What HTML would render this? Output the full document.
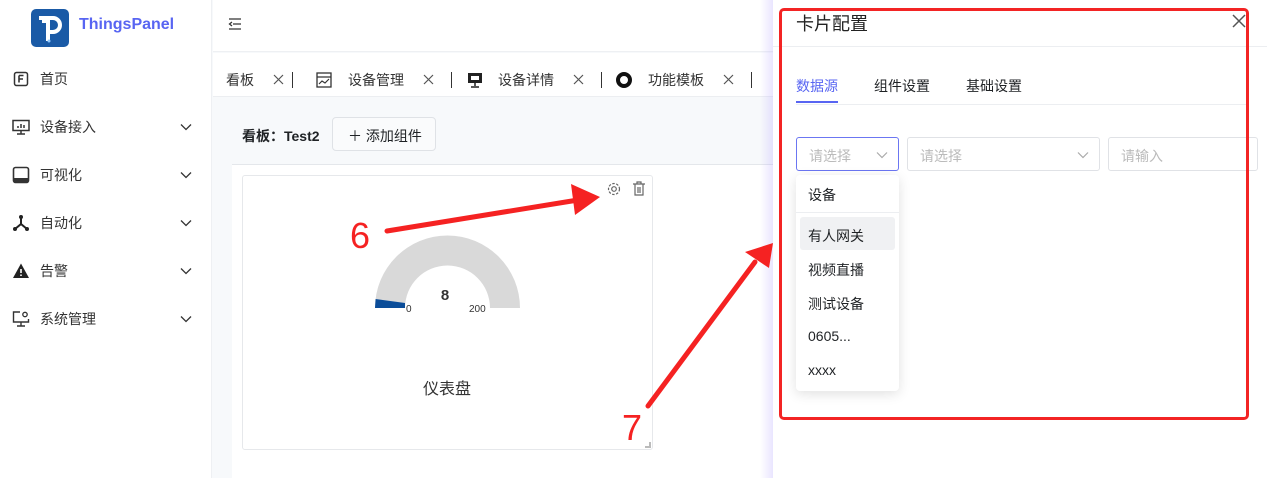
<!DOCTYPE html>
<html><head><meta charset="utf-8"><style>
*{box-sizing:border-box;margin:0;padding:0}
body{width:1267px;height:478px;overflow:hidden;position:relative;background:#f7f9fb;font-family:"Liberation Sans","Noto Sans CJK SC",sans-serif;color:#1f2225;font-size:14px}
.abs{position:absolute}
.side{left:0;top:0;width:212px;height:478px;background:#fff;border-right:1px solid #eef0f3}
.menu{left:12px;width:190px;height:20px;display:flex;align-items:center;font-size:14px;color:#333}
.menu .ic{width:18px;height:18px;margin-right:10px;display:flex;align-items:center;justify-content:center}
.menu .ch{position:absolute;right:10px;top:6px}
.tab{top:70px;font-size:14px;color:#333}
.x{top:74px}
</style></head><body>
<div class="abs side">
 <div class="abs" style="left:31px;top:9px;width:38px;height:38px;background:#1a5aa6;border-radius:5px">
  <svg width="38" height="38" viewBox="0 0 38 38"><path d="M8 9h14a7 7 0 0 1 0 14h-3M13 9v3h4v20" stroke="#fff" stroke-width="4" fill="none"/><circle cx="18" cy="32" r="1.5" fill="#8fc8ff"/></svg>
 </div>
 <div class="abs" style="left:79px;top:16px;font-size:16px;font-weight:bold;color:#5865f2">ThingsPanel</div>
 <div class="abs menu" style="top:69px"><div class="ic"><svg width="16" height="16"><rect x="1.5" y="1.5" width="13" height="13" rx="2" stroke="#333" fill="none" stroke-width="1.5"/><path d="M6 4.5v7M6 4.5h4.5M6 8h4" stroke="#333" stroke-width="1.6"/></svg></div>首页</div>
 <div class="abs menu" style="top:117px"><div class="ic"><svg width="18" height="16"><rect x="1" y="1.5" width="16" height="10" stroke="#333" fill="none" stroke-width="1.5"/><path d="M9 12v3M5 15h8M6 9V7M9 9V5M12 9V6" stroke="#333" stroke-width="1.5"/></svg></div>设备接入<svg class="ch" width="12" height="8"><path d="M1 1.5l5 5 5-5" stroke="#333" stroke-width="1.3" fill="none"/></svg></div>
 <div class="abs menu" style="top:165px"><div class="ic"><svg width="18" height="18"><rect x="1.5" y="1.5" width="15" height="15" rx="2" stroke="#333" fill="none" stroke-width="1.6"/><rect x="2" y="12" width="14" height="4" fill="#333"/></svg></div>可视化<svg class="ch" width="12" height="8"><path d="M1 1.5l5 5 5-5" stroke="#333" stroke-width="1.3" fill="none"/></svg></div>
 <div class="abs menu" style="top:213px"><div class="ic"><svg width="18" height="18"><path d="M9 3v7L3 15M9 10l6 5" stroke="#222" stroke-width="2" fill="none"/><circle cx="9" cy="3" r="2" fill="#222"/><circle cx="3" cy="15" r="2" fill="#222"/><circle cx="15" cy="15" r="2" fill="#222"/></svg></div>自动化<svg class="ch" width="12" height="8"><path d="M1 1.5l5 5 5-5" stroke="#333" stroke-width="1.3" fill="none"/></svg></div>
 <div class="abs menu" style="top:261px"><div class="ic"><svg width="18" height="18"><path d="M9 1.5L17 16H1z" fill="#222"/><path d="M9 7v4M9 12.5v1.5" stroke="#fff" stroke-width="1.6"/></svg></div>告警<svg class="ch" width="12" height="8"><path d="M1 1.5l5 5 5-5" stroke="#333" stroke-width="1.3" fill="none"/></svg></div>
 <div class="abs menu" style="top:309px"><div class="ic"><svg width="18" height="18"><path d="M8 2H1.5v10h15V9M9 12v4M5 16h8" stroke="#333" stroke-width="1.4" fill="none"/><circle cx="13" cy="4.5" r="2.2" stroke="#333" fill="none" stroke-width="1.3"/></svg></div>系统管理<svg class="ch" width="12" height="8"><path d="M1 1.5l5 5 5-5" stroke="#333" stroke-width="1.3" fill="none"/></svg></div>
</div>
<div class="abs" style="left:213px;top:0;width:560px;height:52px;background:#fff;border-bottom:1px solid #eef0f3"></div>
<svg class="abs" style="left:228px;top:17px" width="14" height="14"><path d="M1 2h12M5 7h8M1 12h12M4 5L1.5 7 4 9" stroke="#333" stroke-width="1.3" fill="none"/></svg>
<div class="abs" style="left:213px;top:53px;width:560px;height:44px;background:#fff;border-bottom:1px solid #eceef1"></div>
<div class="abs tab" style="left:226px">看板</div>
<svg class="abs x" style="left:273px" width="11" height="11"><path d="M1 1l9 9M10 1l-9 9" stroke="#555" stroke-width="1.2"/></svg>
<div class="abs" style="left:292px;top:72px;width:1px;height:16px;background:#333"></div>
<svg class="abs" style="left:316px;top:72px" width="16" height="16"><rect x="1" y="1" width="14" height="14" stroke="#333" fill="none" stroke-width="1.3"/><path d="M1 5h14M3 12l3-3 3 2 4-4" stroke="#333" stroke-width="1.2" fill="none"/></svg>
<div class="abs tab" style="left:348px">设备管理</div>
<svg class="abs x" style="left:423px" width="11" height="11"><path d="M1 1l9 9M10 1l-9 9" stroke="#555" stroke-width="1.2"/></svg>
<div class="abs" style="left:451px;top:72px;width:1px;height:16px;background:#333"></div>
<svg class="abs" style="left:467px;top:72px" width="16" height="16"><rect x="1" y="1" width="14" height="10" fill="#222"/><rect x="4" y="4" width="8" height="4" fill="#fff"/><path d="M8 11v3M4 15h8" stroke="#222" stroke-width="1.5"/></svg>
<div class="abs tab" style="left:498px">设备详情</div>
<svg class="abs x" style="left:573px" width="11" height="11"><path d="M1 1l9 9M10 1l-9 9" stroke="#555" stroke-width="1.2"/></svg>
<div class="abs" style="left:601px;top:72px;width:1px;height:16px;background:#333"></div>
<div class="abs" style="left:616px;top:72px;width:16px;height:16px;border-radius:50%;border:4px solid #111"></div>
<div class="abs tab" style="left:648px">功能模板</div>
<svg class="abs x" style="left:723px" width="11" height="11"><path d="M1 1l9 9M10 1l-9 9" stroke="#555" stroke-width="1.2"/></svg>
<div class="abs" style="left:751px;top:72px;width:1px;height:16px;background:#333"></div>
<div class="abs" style="left:242px;top:126px;font-size:14px;font-weight:bold">看板：Test2</div>
<div class="abs" style="left:332px;top:117px;width:104px;height:34px;border:1px solid #dfe2e6;border-radius:4px;background:#fafbfc;font-size:14px;padding:8px 0 0 15px">＋ 添加组件</div>
<div class="abs" style="left:232px;top:164px;width:541px;height:314px;background:#fff;border-top:1px solid #e4e7eb"></div>
<div class="abs" style="left:242px;top:175px;width:411px;height:275px;border:1px solid #e6e8eb;border-radius:3px;background:#fff"></div>
<svg class="abs" style="left:606px;top:181px" width="16" height="16"><circle cx="8" cy="8" r="2.3" stroke="#666" fill="none" stroke-width="1.2"/><circle cx="8" cy="8" r="5.5" stroke="#666" fill="none" stroke-width="1.2" stroke-dasharray="2.5 1.5"/></svg>
<svg class="abs" style="left:632px;top:181px" width="14" height="16"><path d="M1 3h12M5 3V1h4v2M3 3v11h8V3M6 6v6M8 6v6" stroke="#666" stroke-width="1.2" fill="none"/></svg>
<svg class="abs" style="left:370px;top:230px" width="160" height="90"><path d="M5 78A72.5 72.5 0 0 1 150 78H120A42.5 42.5 0 0 0 35 78Z" fill="#d9d9d9"/><path d="M5 78L5.6 69L35 73L35 78Z" fill="#0b4d99"/><text x="75" y="70" text-anchor="middle" font-size="15" font-weight="bold" font-family="Liberation Sans" fill="#333">8</text><text x="36" y="82" font-size="10" font-family="Liberation Sans" fill="#333">0</text><text x="99" y="82" font-size="10" font-family="Liberation Sans" fill="#333">200</text></svg>
<div class="abs" style="left:423px;top:375px;font-size:16px;color:#333">仪表盘</div>
<div class="abs" style="left:645px;top:442px;width:6px;height:6px;border-right:2px solid #bbb;border-bottom:2px solid #bbb"></div>
<!-- drawer -->
<div class="abs" style="left:760px;top:0;width:14px;height:478px;background:linear-gradient(90deg,rgba(150,130,255,0),rgba(150,130,255,.22))"></div>
<div class="abs" style="left:773px;top:0;width:494px;height:478px;background:#fff"></div>
<div class="abs" style="left:773px;top:46px;width:494px;height:1px;background:#eceef1"></div>
<div class="abs" style="left:796px;top:10px;font-size:18px;color:#222">卡片配置</div>
<svg class="abs" style="left:1231px;top:13px" width="16" height="16"><path d="M2 2l12 12M14 2L2 14" stroke="#555" stroke-width="1.5"/></svg>
<div class="abs" style="left:796px;top:76px;font-size:14px;color:#5865f2">数据源</div>
<div class="abs" style="left:796px;top:101px;width:42px;height:2px;background:#5865f2"></div>
<div class="abs" style="left:874px;top:76px;font-size:14px">组件设置</div>
<div class="abs" style="left:966px;top:76px;font-size:14px">基础设置</div>
<div class="abs" style="left:796px;top:104px;width:450px;height:1px;background:#eceef1"></div>
<div class="abs" style="left:796px;top:137px;width:103px;height:34px;border:1px solid #6b76f2;border-radius:3px;color:#bbb;padding:8px 12px;font-size:14px">请选择<svg style="position:absolute;right:10px;top:13px" width="12" height="8"><path d="M1 1.5l5 5 5-5" stroke="#aaa" stroke-width="1.2" fill="none"/></svg></div>
<div class="abs" style="left:907px;top:137px;width:193px;height:34px;border:1px solid #e0e2e6;border-radius:3px;color:#bbb;padding:8px 12px;font-size:14px">请选择<svg style="position:absolute;right:10px;top:13px" width="12" height="8"><path d="M1 1.5l5 5 5-5" stroke="#aaa" stroke-width="1.2" fill="none"/></svg></div>
<div class="abs" style="left:1108px;top:137px;width:150px;height:34px;border:1px solid #e0e2e6;border-radius:3px;color:#bbb;padding:8px 12px;font-size:14px">请输入</div>
<div class="abs" style="left:796px;top:175px;width:103px;height:216px;background:#fff;border-radius:4px;box-shadow:0 3px 12px rgba(0,0,0,.12)"></div>
<div class="abs" style="left:808px;top:185px;font-size:14px">设备</div>
<div class="abs" style="left:796px;top:212px;width:103px;height:1px;background:#eceef1"></div>
<div class="abs" style="left:800px;top:217px;width:95px;height:33px;background:#f0f1f3;border-radius:3px"></div>
<div class="abs" style="left:808px;top:226px;font-size:14px">有人网关</div>
<div class="abs" style="left:808px;top:260px;font-size:14px">视频直播</div>
<div class="abs" style="left:808px;top:294px;font-size:14px">测试设备</div>
<div class="abs" style="left:808px;top:328px;font-size:14px">0605...</div>
<div class="abs" style="left:808px;top:362px;font-size:14px">xxxx</div>
<!-- annotations -->
<div class="abs" style="left:779px;top:8px;width:470px;height:412px;border:3px solid #f32424;border-radius:5px"></div>
<svg class="abs" style="left:0;top:0" width="1267" height="478"><path d="M387 231L578 200" stroke="#f52222" stroke-width="5" stroke-linecap="round"/><path d="M571 184L600 197L575 215Z" fill="#f52222"/><path d="M648 406L755 262" stroke="#f52222" stroke-width="5" stroke-linecap="round"/><path d="M745 252L773 243L769 268Z" fill="#f52222"/><text x="350" y="248" font-size="36" font-family="Liberation Sans" fill="#f52222">6</text><text x="622" y="440" font-size="36" font-family="Liberation Sans" fill="#f52222">7</text></svg>
</body></html>
